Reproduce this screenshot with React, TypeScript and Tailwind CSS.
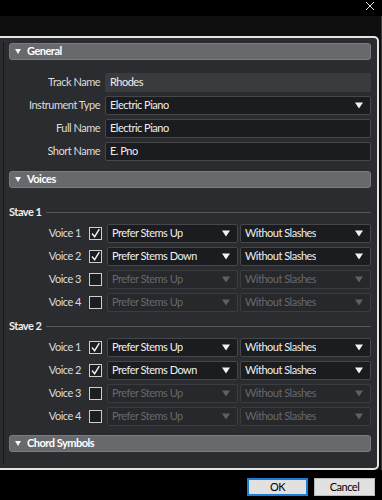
const stemsUp = "Prefer Stems Up";
const stemsDown = "Prefer Stems Down";
const slashes = "Without Slashes";

const staves = [
  {
    name: "Stave 1",
    voices: [
      { n: 1, on: true, stem: stemsUp },
      { n: 2, on: true, stem: stemsDown },
      { n: 3, on: false, stem: stemsUp },
      { n: 4, on: false, stem: stemsUp },
    ],
  },
  {
    name: "Stave 2",
    voices: [
      { n: 1, on: true, stem: stemsUp },
      { n: 2, on: true, stem: stemsDown },
      { n: 3, on: false, stem: stemsUp },
      { n: 4, on: false, stem: stemsUp },
    ],
  },
];

function Arrow({ dim }: { dim?: boolean }) {
  return (
    <svg width="8" height="7" viewBox="0 0 8 7" className="shrink-0">
      <path d="M0 0.5h8L4 6.5z" fill={dim ? "#5e6064" : "#f2f2f2"} />
    </svg>
  );
}

function Header({ title }: { title: string }) {
  return (
    <div className="flex h-[17px] items-center gap-[6px] rounded-[3px] border border-[#7b7c7f] bg-[#68696c] pl-[5px] text-[11px] font-bold text-white">
      <svg width="6" height="5" viewBox="0 0 6 5">
        <path d="M0 0h6L3 5z" fill="#f4f4f4" />
      </svg>
      {title}
    </div>
  );
}

function Field({ label, children }: { label: string; children: React.ReactNode }) {
  return (
    <div className="flex items-center gap-[5px]">
      <div className="w-[91px] shrink-0 text-right text-[11px] text-[#dcdcdc]">{label}</div>
      {children}
    </div>
  );
}

function Select({ value, dim }: { value: string; dim?: boolean }) {
  return (
    <div
      className={
        dim
          ? "flex h-[19px] min-w-0 flex-1 items-center justify-between rounded-[2px] border border-[#3a3c40] bg-[#26282b] pl-[4px] pr-[7px] text-[11px] text-[#66686b]"
          : "flex h-[19px] min-w-0 flex-1 items-center justify-between rounded-[2px] border border-[#45474b] bg-[#1b1c1f] pl-[4px] pr-[7px] text-[11px] text-[#efefef]"
      }
    >
      <span className="truncate">{value}</span>
      <Arrow dim={dim} />
    </div>
  );
}

function Check({ on }: { on: boolean }) {
  return (
    <div className="flex h-[13px] w-[13px] shrink-0 items-center justify-center border border-[#cfcfcf] bg-[#1d1e21]">
      {on && (
        <svg width="11" height="11" viewBox="0 0 11 11">
          <path d="M2 5.5l2.6 3.2L9.3 1.2" stroke="#f4f4f4" strokeWidth="1.4" fill="none" />
        </svg>
      )}
    </div>
  );
}

export default function App() {
  return (
    <div className="flex h-[500px] w-[382px] flex-col overflow-hidden bg-black font-['Lato',sans-serif] tracking-[-0.5px]">
      <div className="flex h-[16px] shrink-0 items-start justify-end bg-black pr-[7px] pt-[1px]">
        <svg width="10" height="10" viewBox="0 0 10 10">
          <path d="M1 1l8 8M9 1l-8 8" stroke="#e6e6e6" strokeWidth="1" />
        </svg>
      </div>
      <div className="flex h-[454px] shrink-0 border-r border-[#3c3c3c] bg-[#0f0f10] pt-[20px] pr-[3px]">
        <div className="flex h-[434px] w-[379px] shrink-0 rounded-r-[5px] border-y-2 border-r-2 border-[#e4e4e4] bg-[#2a2c30]">
          <div className="my-[4px] ml-[3px] w-[1px] bg-[#17181a]" />
          <div className="flex flex-1 flex-col pl-[5px] pr-[6px] pt-[5px]">
            <Header title="General" />
            <div className="mt-[13px] flex flex-col gap-[4px]">
              <Field label="Track Name">
                <div className="flex h-[19px] flex-1 items-center rounded-[2px] bg-[#393b3f] pl-[5px] text-[11px] text-[#efefef]">
                  Rhodes
                </div>
              </Field>
              <Field label="Instrument Type">
                <Select value="Electric Piano" />
              </Field>
              <Field label="Full Name">
                <div className="flex h-[19px] flex-1 items-center rounded-[2px] border border-[#45474b] bg-[#1b1c1f] pl-[4px] text-[11px] text-[#efefef]">
                  Electric Piano
                </div>
              </Field>
              <Field label="Short Name">
                <div className="flex h-[19px] flex-1 items-center rounded-[2px] border border-[#45474b] bg-[#1b1c1f] pl-[4px] text-[11px] text-[#efefef]">
                  E. Pno
                </div>
              </Field>
            </div>
            <div className="mt-[10px]">
              <Header title="Voices" />
            </div>
            <div className="mt-[17px] flex flex-col">
              {staves.map((s, i) => (
                <div key={s.name} className={i > 0 ? "mt-[7px] flex flex-col" : "flex flex-col"}>
                  <div className="flex h-[14px] items-center gap-[5px]">
                    <span className="text-[11px] font-bold text-[#efefef]">{s.name}</span>
                    <div className="h-[1px] flex-1 bg-[#55575b]" />
                  </div>
                  <div className="mt-[5px] flex flex-col gap-[4px]">
                    {s.voices.map((v) => (
                      <div key={v.n} className="flex items-center">
                        <div className="w-[72px] shrink-0 text-right text-[11px] text-[#dcdcdc]">
                          Voice {v.n}
                        </div>
                        <div className="ml-[8px] mr-[5px]">
                          <Check on={v.on} />
                        </div>
                        <div className="flex flex-1 gap-[2px]">
                          <Select value={v.stem} dim={!v.on} />
                          <Select value={slashes} dim={!v.on} />
                        </div>
                      </div>
                    ))}
                  </div>
                </div>
              ))}
            </div>
            <div className="mt-[9px]">
              <Header title="Chord Symbols" />
            </div>
          </div>
        </div>
      </div>
      <div className="flex flex-1 items-start justify-end gap-[6px] bg-black pr-[7px] pt-[8px]">
        <button className="flex h-[18px] w-[61px] items-center justify-center border-2 border-[#1a7fd4] bg-[#e1e1e1] text-[11px] text-black">
          OK
        </button>
        <button className="flex h-[18px] w-[61px] items-center justify-center border border-[#b8b8b8] bg-[#e1e1e1] text-[11px] text-black">
          Cancel
        </button>
      </div>
    </div>
  );
}
